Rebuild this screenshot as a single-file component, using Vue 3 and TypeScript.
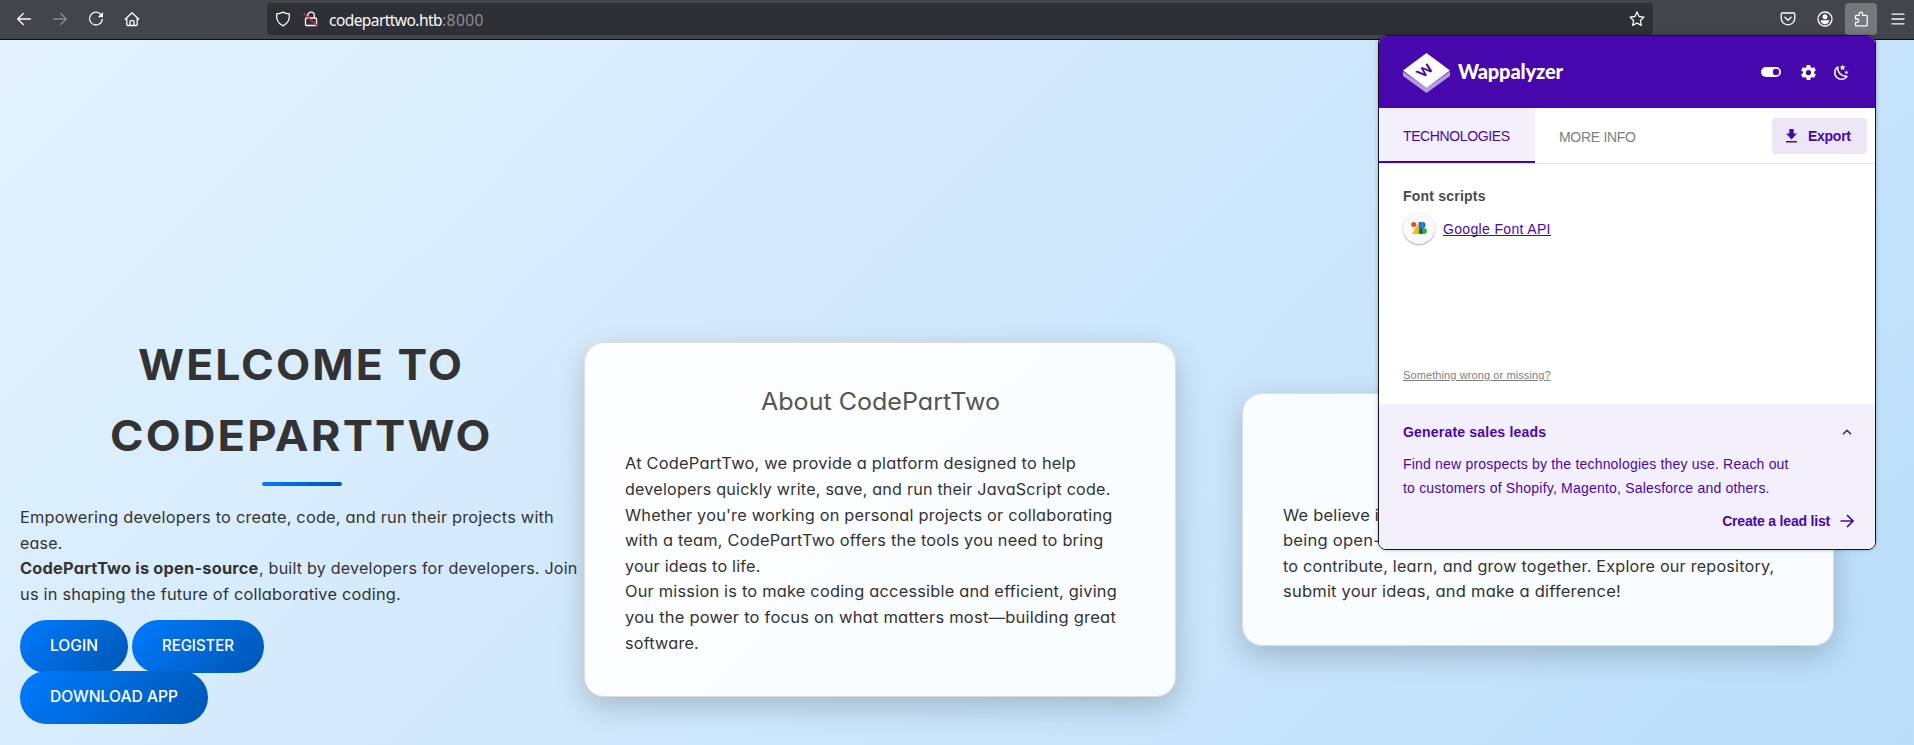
<script setup lang="ts">
import type { Directive } from 'vue'

interface Line { text: string; width: number }

const heading: Line[] = [
  { text: 'WELCOME TO', width: 326 },
  { text: 'CODEPARTTWO', width: 382.5 },
]
const about: Line[] = [
  { text: 'At CodePartTwo, we provide a platform designed to help', width: 451 },
  { text: 'developers quickly write, save, and run their JavaScript code.', width: 485.5 },
  { text: "Whether you're working on personal projects or collaborating", width: 487.5 },
  { text: 'with a team, CodePartTwo offers the tools you need to bring', width: 478.5 },
  { text: 'your ideas to life.', width: 135.5 },
  { text: 'Our mission is to make coding accessible and efficient, giving', width: 492 },
  { text: 'you the power to focus on what matters most—building great', width: 491 },
  { text: 'software.', width: 74 },
]
const openSource: Line[] = [
  { text: 'We believe in', width: 106 },
  { text: 'being open-', width: 98 },
  { text: 'to contribute, learn, and grow together. Explore our repository,', width: 491.5 },
  { text: 'submit your ideas, and make a difference!', width: 338 },
]

// Sets a single line of text to the given width: by tracking,
// or with the stretch modifier by widening the letters themselves.
const vFit: Directive<HTMLElement, number, 'stretch'> = {
  mounted(el, { value, modifiers }) {
    const natural = el.getBoundingClientRect().width
    if (modifiers.stretch) {
      el.style.display = 'inline-block'
      el.style.textAlign = 'left'
      el.style.width = `${value}px`
      el.style.transformOrigin = '0 50%'
      el.style.transform = `scaleX(${value / natural})`
      return
    }
    const count = (el.textContent ?? '').length - 1
    el.style.letterSpacing = `${(value - natural) / count}px`
  },
}
</script>

<template>
  <div class="window">
    <header class="toolbar">
      <nav class="nav">
        <svg class="ico" viewBox="0 0 16 16"><path d="M14.5 8H1.8M7.3 2.5 1.7 8l5.6 5.5" /></svg>
        <svg class="ico dim" viewBox="0 0 16 16"><path d="M1.5 8h12.7M8.7 2.5 14.3 8l-5.6 5.5" /></svg>
        <svg class="ico" viewBox="0 0 16 16"><path d="M12.9 3.5A6.4 6.4 0 1 0 14.3 8.3" /><path class="solid" d="M15 1v5.2H9.8z" /></svg>
        <svg class="ico" viewBox="0 0 16 16"><path d="M1.2 8.3 8 1.8l6.8 6.5M2.8 7v6.6c0 .6.3.9.9.9h8.6c.6 0 .9-.3.9-.9V7M6 14.4v-3.6c0-.7.4-1.1 1-1.1h2c.6 0 1 .4 1 1.1v3.6" /></svg>
      </nav>
      <div class="urlbar">
        <svg class="ico shield" viewBox="0 0 16 16"><path d="M8 1.1c2 1.2 4 1.7 6.3 1.8.6 5.600-1.500 9.800-6.300 12C3.200 12.700 1.100 8.500 1.700 2.900 4 2.800 6 2.300 8 1.100z" /></svg>
        <svg class="ico lock" viewBox="0 0 16 16"><path d="M4.700 7V4.600C4.700 2.700 6.100 1.200 8 1.200s3.300 1.500 3.300 3.400V7M3.500 7h9c.7 0 1 .3 1 1v5.500c0 .7-.3 1-1 1h-9c-.7 0-1-.3-1-1V8c0-.7.300-1 1-1z" /><path class="slash" d="m1 2.500 13.500 12.500" /></svg>
        <span class="address"><span v-fit="113.500">codeparttwo.htb</span><span v-fit="41.500" class="port">:8000</span></span>
        <svg class="ico star" viewBox="0 0 16 16"><path d="m8 1 2.100 4.500 4.900.6-3.600 3.400.9 4.900L8 12l-4.300 2.400.9-4.900L1 6.100l4.900-.6z" /></svg>
      </div>
      <div class="tools">
        <svg class="ico" viewBox="0 0 16 16"><path d="M2.300 2h11.400c.7 0 1.100.4 1.100 1.100V7c0 4-3 6.800-6.800 6.800S1.200 11 1.200 7V3.100C1.200 2.400 1.600 2 2.300 2z" /><path d="m4.800 6.200 3.200 3 3.200-3" /></svg>
        <svg class="ico" viewBox="0 0 16 16"><circle cx="8" cy="8" r="7" /><circle class="solid" cx="8" cy="5.800" r="2.500" /><path class="solid" d="M3.500 9.300h9C12 12 10 13.300 8 13.300S4 12 3.500 9.300z" /></svg>
        <span class="active-tool"><svg class="ico" viewBox="0 0 16 16"><path d="M2.500 5.200c0-.6.300-.9.900-.9h2.800V2.800a1.700 1.700 0 0 1 3.400 0v1.500h3.700c.6 0 .9.300.9.900v8.800c0 .6-.3.900-.9.900H3.400c-.6 0-.9-.3-.9-.9v-2.600h1.500a1.700 1.700 0 0 0 0-3.400H2.500z" /></svg></span>
        <svg class="ico" viewBox="0 0 16 16"><path d="M2 3.200h12M2 8h12M2 12.800h12" /></svg>
      </div>
    </header>

    <main class="page">
      <section class="hero">
        <h1><span v-for="l in heading" :key="l.text" class="row"><span v-fit.stretch="l.width">{{ l.text }}</span></span></h1>
        <i class="rule"></i>
        <div class="copy">
          <span class="row"><span v-fit.stretch="534">Empowering developers to create, code, and run their projects with</span></span>
          <span class="row"><span v-fit.stretch="42.500">ease.</span></span>
          <span class="row"><b v-fit.stretch="238.500">CodePartTwo is open-source</b><span v-fit.stretch="318.500">, built by developers for developers. Join</span></span>
          <span class="row"><span v-fit.stretch="381">us in shaping the future of collaborative coding.</span></span>
        </div>
        <div class="buttons">
          <a class="btn login"><span v-fit.stretch="48">LOGIN</span></a>
          <a class="btn register"><span v-fit.stretch="72">REGISTER</span></a>
        </div>
        <div class="buttons second">
          <a class="btn download"><span v-fit.stretch="128">DOWNLOAD APP</span></a>
        </div>
      </section>
      <section class="card first">
        <h2><span v-fit.stretch="239">About CodePartTwo</span></h2>
        <span v-for="l in about" :key="l.text" class="row"><span v-fit.stretch="l.width">{{ l.text }}</span></span>
      </section>
      <section class="card second-card">
        <h2></h2>
        <span v-for="l in openSource" :key="l.text" class="row"><span v-fit.stretch="l.width">{{ l.text }}</span></span>
      </section>
    </main>

    <aside class="popup">
      <div class="brandbar">
        <svg class="logo" viewBox="0 0 47 40">
          <path fill="#b59ddd" d="M0 18.500v4.500l23.500 17L47 23v-4.500L23.500 35z" />
          <path fill="#fff" d="M23.500 0 47 17.500 23.500 35 0 17.500z" />
          <text class="mark" transform="matrix(.82 -.6 .75 .62 19.800 25.200)">W</text>
        </svg>
        <span class="brand"><span v-fit="105">Wappalyzer</span></span>
        <svg class="toggle" viewBox="0 0 20 10"><rect width="20" height="10" rx="5" fill="#fff" /><circle cx="15" cy="5" r="3.200" fill="#4608ad" /></svg>
        <svg class="gear" viewBox="2 2 20 20"><path fill="#fff" d="M12 15.500A3.500 3.500 0 0 1 8.500 12 3.500 3.500 0 0 1 12 8.500a3.500 3.500 0 0 1 3.500 3.500 3.500 3.500 0 0 1-3.500 3.500m7.430-2.530c.04-.32.07-.64.07-.97s-.03-.66-.07-1l2.110-1.630c.19-.15.24-.42.12-.64l-2-3.460c-.12-.22-.39-.31-.61-.22l-2.490 1c-.52-.39-1.060-.73-1.690-.98l-.37-2.650A.506.506 0 0 0 14 2h-4c-.25 0-.46.18-.5.42l-.37 2.650c-.63.25-1.170.59-1.690.98l-2.490-1c-.22-.09-.49 0-.61.22l-2 3.460c-.13.22-.07.49.12.64L4.570 11c-.04.34-.07.67-.07 1s.03.65.07.97l-2.110 1.660c-.19.15-.25.42-.12.64l2 3.460c.12.22.39.3.61.22l2.490-1.010c.52.4 1.060.74 1.690.99l.37 2.650c.04.24.25.42.5.42h4c.25 0 .46-.18.5-.42l.37-2.650c.63-.26 1.170-.59 1.690-.99l2.490 1.010c.22.08.49 0 .61-.22l2-3.460c.12-.22.07-.49-.12-.64z" /></svg>
        <svg class="moon" viewBox="2 2 20 20"><path fill="#fff" d="m17.750 4.090-2.530 1.940.91 3.060-2.630-1.810-2.630 1.810.91-3.060-2.530-1.940L12.440 4l1.060-3 1.060 3zm3.500 6.910-1.640 1.250.59 1.980-1.700-1.170-1.700 1.170.59-1.980L15.750 11l2.060-.05L18.500 9l.69 1.950zm-2.280 4.950c.83-.08 1.720 1.100 1.190 1.850-.32.450-.66.870-1.080 1.270C15.170 23 8.840 23 4.940 19.070c-3.910-3.900-3.910-10.240 0-14.140.4-.4.820-.76 1.270-1.080.75-.53 1.930.36 1.850 1.190-.27 2.860.69 5.830 2.890 8.020a9.960 9.960 0 0 0 8.020 2.890m-1.640 2.020a12.080 12.080 0 0 1-7.800-3.470c-2.170-2.190-3.330-5-3.490-7.820-2.810 3.140-2.700 7.960.31 10.980 3.020 3.010 7.840 3.120 10.980.31" /></svg>
      </div>
      <div class="tabs">
        <div class="tab on"><span v-fit="107">TECHNOLOGIES</span></div>
        <div class="tab"><span v-fit="77">MORE INFO</span></div>
        <button class="export">
          <svg viewBox="0 0 11 14"><path fill="#4608ad" d="M3.300 0h4.400v4.500H11L5.500 10.500 0 4.500h3.300zM0 12h11v1.600H0z" /></svg>
          <span v-fit="43">Export</span>
        </button>
      </div>
      <div class="results">
        <div class="category"><span v-fit="82.500">Font scripts</span></div>
        <div class="tech">
          <span class="badge">
            <svg viewBox="0 0 16 12"><path fill="#fbbc04" d="M7.800 0v12H1z" /><path fill="#1a73e8" d="M7.800 0h3.700v12H7.800z" /><circle cx="2.700" cy="2.500" r="2.500" fill="#ea4335" /><path fill="#1967d2" d="M11.500 0a3 3 0 0 1 0 6z" /><path fill="#34a853" d="M11.500 6h1.400a3 3 0 0 1 0 6h-1.400z" /><path fill="#0d652d" d="M11.500 6a3 3 0 0 0 0 6z" /></svg>
          </span>
          <a class="tech-link"><span v-fit="107.500">Google Font API</span></a>
        </div>
        <div class="report"><a><span v-fit="147.500">Something wrong or missing?</span></a></div>
      </div>
      <div class="leads">
        <div class="leads-head"><b v-fit="143">Generate sales leads</b>
          <svg viewBox="0 0 10 6"><path d="m1 5.200 4-4 4 4" fill="none" stroke="#4608ad" stroke-width="1.500" /></svg>
        </div>
        <div class="leads-copy">
          <span v-fit="385.500">Find new prospects by the technologies they use. Reach out</span><br>
          <span v-fit="366.500">to customers of Shopify, Magento, Salesforce and others.</span>
        </div>
        <div class="create"><b v-fit="108">Create a lead list</b>
          <svg viewBox="0 0 14 14"><path d="M.5 7h12M7 1l6 6-6 6" fill="none" stroke="#4608ad" stroke-width="1.700" /></svg>
        </div>
      </div>
    </aside>
  </div>
</template>

<style>
body { overflow: hidden; }
</style>

<style scoped>
.window { position: relative; width: 1914px; height: 745px; overflow: hidden; display: flex; flex-direction: column; }
svg { display: block; flex: none; }
.toolbar { height: 39px; background: #42454c; border-bottom: 1px solid #0c0c0d; display: flex; align-items: flex-start; flex: none; }
.ico { width: 16px; height: 16px; fill: none; stroke: #fbfbfe; stroke-width: 1.3; stroke-linejoin: round; stroke-linecap: round; }
.ico.dim { stroke: #8b8c90; }
.ico .solid { fill: #fbfbfe; stroke: none; }
.ico .slash { stroke: #e22850; stroke-width: 1.4; }
.nav { display: flex; gap: 20px; padding: 11px 0 0 16px; width: 267px; box-sizing: border-box; flex: none; }
.urlbar { width: 1386px; height: 32px; margin-top: 3px; background: #2f3035; border-radius: 4px; display: flex; align-items: center; box-sizing: border-box; padding: 0 8px; flex: none; }
.lock { margin-left: 12px; }
.address { margin-left: 10px; flex: 1; font: 15.500px/24px "Noto Sans", sans-serif; color: #fbfbfe; white-space: nowrap; padding-top: 1px; }
.port { color: #8d8e92; }
.tools { display: flex; align-items: center; height: 32px; margin: 3px 0 0 127px; gap: 20.500px; }
.active-tool { display: flex; align-items: center; justify-content: center; width: 32px; height: 32px; border-radius: 4px; background: #77787c; margin: 0 -8px; }

.page { flex: 1; display: flex; align-items: center; align-content: flex-start; flex-wrap: wrap; box-sizing: border-box; padding: 288.5px 0 0 20px; background: linear-gradient(135deg, #e3f2fd, #bbdefb); font-family: Inter, sans-serif; font-size: 15.7px; line-height: 25.6px; font-feature-settings: "cv11"; color: #333; min-height: 0; overflow: hidden; }
.row { display: block; white-space: nowrap; }
.copy .row, .card .row { height: 25.6px; letter-spacing: .2px; }
.hero { width: 560px; height: 382.3px; }
h1 { margin: 0; font-size: 43px; line-height: 71.6px; font-weight: 700; text-align: center; letter-spacing: 2px; }
h1 .row { height: 71.6px; position: relative; left: 1px; }
.rule { display: block; width: 80px; height: 4px; margin: 10px auto 19.5px; border-radius: 2px; background: linear-gradient(90deg, #007bff, #0056b3); position: relative; left: 2px; }
.buttons { display: flex; gap: 4px; margin-top: 12px; }
.buttons.second { margin-top: -2px; }
.btn { height: 53px; border-radius: 50px; background: linear-gradient(135deg, #007bff, #0056b3); color: #fff; font-weight: 500; line-height: 52px; padding-left: 30px; box-sizing: border-box; white-space: nowrap; font-size: 15.3px; }
.login { width: 108px; }
.register { width: 132px; }
.download { width: 188px; }
.card { box-sizing: border-box; width: 591.6px; padding: 40px; border: 1px solid #ddd; border-radius: 20px; background: rgba(255, 255, 255, .9); background-clip: padding-box; box-shadow: 0 10px 30px rgba(0, 0, 0, .2); }
.first { margin-left: 4.300px; }
.second-card { margin-left: 66.400px; }
h2 { margin: 0 0 30px; height: 38.4px; line-height: 38.4px; font-size: 24px; font-weight: 400; color: #555; text-align: center; white-space: nowrap; }

.popup { position: absolute; left: 1378px; top: 35px; width: 498px; height: 515px; box-sizing: border-box; border: 1px solid #15141a; border-radius: 8px; overflow: hidden; background: #fff; font-family: "Liberation Sans", Arial, sans-serif; font-size: 14px; color: #4608ad; white-space: nowrap; box-shadow: 0 0 4px rgba(0, 0, 0, .25); display: flex; flex-direction: column; }
.brandbar { height: 72px; background: #4608ad; display: flex; align-items: center; padding: 0 26px 0 24px; flex: none; }
.logo { width: 47px; height: 40px; margin-top: 2px; }
.mark { font: 900 14px Lato, sans-serif; fill: #4608ad; }
.brand { margin-left: 8px; font: 900 20px/24px Lato, sans-serif; color: #fff; flex: 1; margin-top: -2px; }
.toggle { width: 20px; height: 10px; }
.gear { width: 15px; height: 15px; margin-left: 20px; }
.moon { width: 15px; height: 15px; margin-left: 18px; overflow: visible; }
.tabs { display: flex; height: 55px; border-bottom: 1px solid #e5e5e8; flex: none; }
.tab { padding: 0 24px; line-height: 58px; color: #808080; }
.tab.on { width: 108px; line-height: 56px; color: #4608ad; background: #f4f0fb; border-bottom: 2px solid #4608ad; height: 53px; }
.export { margin: 10px 8px 0 auto; width: 95px; height: 36px; box-sizing: border-box; border: 0; border-radius: 4px; background: #ece6f6; color: #4608ad; font: bold 14px "Liberation Sans", Arial, sans-serif; padding: 0 0 0 14px; display: flex; align-items: center; gap: 11px; }
.export svg { width: 11px; height: 14px; }
.results { height: 240px; padding: 22px 24px 0; box-sizing: border-box; flex: none; }
.category { font-weight: 700; line-height: 20px; color: #4a4a4a; }
.tech { display: flex; align-items: center; height: 32px; margin-top: 6px; }
.badge { width: 32px; height: 32px; border-radius: 50%; background: #fafafa; box-shadow: 0 1px 2px rgba(0, 0, 0, .35); display: flex; align-items: center; justify-content: center; }
.badge svg { width: 16px; height: 12px; }
.tech-link { margin-left: 8px; line-height: 18px; border-bottom: 1px solid #4608ad; height: 15px; }
.report { margin-top: 122px; font-size: 11px; line-height: 18px; color: #808080; text-decoration: underline; }
.leads { background: #f4f0fb; flex: 1; padding: 18px 20px 0 24px; }
.leads-head { display: flex; justify-content: space-between; align-items: center; line-height: 20px; padding-right: 3px; }
.leads-head svg { width: 10px; height: 6px; }
.leads-copy { margin-top: 10px; line-height: 24px; }
.create { display: flex; justify-content: flex-end; align-items: center; gap: 10px; margin-top: 9px; line-height: 24px; padding-right: 1px; }
.create svg { width: 14px; height: 14px; }
</style>
